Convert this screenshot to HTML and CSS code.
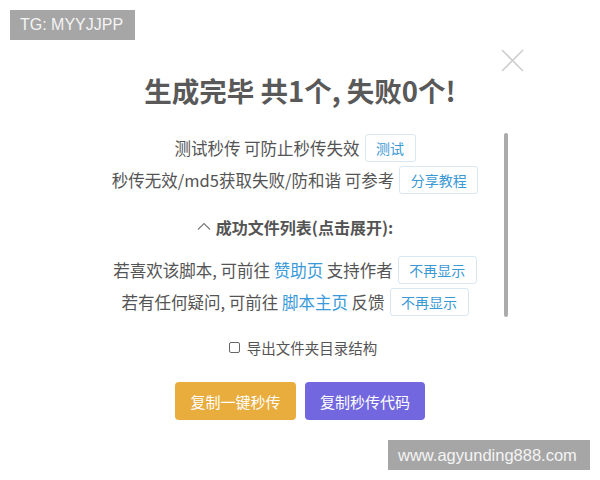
FILE: index.html
```html
<!DOCTYPE html>
<html lang="zh-CN">
<head>
<meta charset="utf-8">
<title>生成完毕</title>
<link rel="stylesheet" href="styles.css">
</head>
<body>
<div class="page">
  <div class="badge badge-tg">TG: MYYJJPP</div>
  <div class="popup">
    <button class="close" aria-label="关闭">
      <svg width="23" height="23" viewBox="0 0 23 23"><path d="M1 1L22 22M22 1L1 22" stroke="#cfcfcf" stroke-width="1.6" fill="none"/></svg>
    </button>
    <h2 class="title">生成完毕 共1个, 失败0个!</h2>
    <div class="content">
      <div class="scroll-body">
        <div class="row">测试秒传 可防止秒传失效<button class="mini">测试</button></div>
        <div class="row">秒传无效/md5获取失败/防和谐 可参考<button class="mini">分享教程</button></div>
        <div class="row section">
          <svg class="caret" width="14" height="8" viewBox="0 0 14 8"><path d="M1 7.5L7 1.5L13 7.5" stroke="#777" stroke-width="1.1" fill="none"/></svg>
          <span>成功文件列表(点击展开):</span>
        </div>
        <div class="row row-gap">若喜欢该脚本, 可前往&nbsp;<a class="link">赞助页</a>&nbsp;支持作者<button class="mini">不再显示</button></div>
        <div class="row">若有任何疑问, 可前往&nbsp;<a class="link">脚本主页</a>&nbsp;反馈<button class="mini">不再显示</button></div>
      </div>
      <div class="scrollbar"></div>
    </div>
    <label class="check"><span class="box"></span>导出文件夹目录结构</label>
    <div class="actions">
      <button class="btn btn-orange">复制一键秒传</button>
      <button class="btn btn-purple">复制秒传代码</button>
    </div>
  </div>
  <div class="badge badge-site">www.agyunding888.com</div>
</div>
</body>
</html>
```
FILE: styles.css
```css
html, body {
  margin: 0;
  padding: 0;
  background: #fff;
}
.page {
  position: relative;
  width: 600px;
  height: 480px;
  overflow: hidden;
  font-family: "Noto Sans CJK SC", "Noto Sans", sans-serif;
  color: #545454;
}
.badge {
  position: absolute;
  background: #a6a6a6;
  color: #f4f4f4;
  font-family: "Liberation Sans", Arial, sans-serif;
  height: 30px;
  line-height: 30px;
  box-sizing: border-box;
}
.badge-tg {
  left: 10px;
  top: 10px;
  width: 125px;
  padding-left: 10px;
  font-size: 16px;
}
.badge-site {
  left: 388px;
  top: 440px;
  width: 202px;
  padding-left: 10px;
  font-size: 16.5px;
}
.popup {
  position: relative;
  display: flex;
  flex-direction: column;
  align-items: center;
  padding-top: 72px;
}
.close {
  position: absolute;
  left: 501px;
  top: 49px;
  width: 23px;
  height: 23px;
  padding: 0;
  border: 0;
  background: none;
  display: block;
}
.close svg { display: block; }
.title {
  margin: 0;
  font-size: 27.5px;
  line-height: 36px;
  font-weight: 700;
  color: #595959;
}
.content {
  margin-top: 24px;
  width: 420px;
  display: flex;
}
.scroll-body {
  flex: 1;
  height: 186px;
  display: flex;
  flex-direction: column;
  align-items: center;
}
.scrollbar {
  width: 4px;
  height: 184px;
  margin: 1px 2px 0 4px;
  background: #ababab;
  border-radius: 2px;
}
.row {
  height: 32px;
  display: flex;
  align-items: center;
  justify-content: center;
  font-size: 16.5px;
  white-space: nowrap;
}
.section {
  margin-top: 15px;
  font-size: 16px;
  font-weight: 700;
}
.caret {
  margin-right: 5px;
  margin-top: -2px;
}
.row-gap { margin-top: 11px; }
.link {
  color: #3a9ad9;
}
.mini {
  margin-left: 5px;
  height: 28px;
  padding: 0 10.5px;
  border: 1px solid #d8e7f1;
  border-radius: 3px;
  background: #fff;
  color: #3a98d5;
  font-family: "Noto Sans CJK SC", sans-serif;
  font-size: 14px;
  line-height: 26px;
}
.check {
  margin-top: 19px;
  height: 20px;
  display: flex;
  align-items: center;
  font-size: 14.5px;
  color: #545454;
  margin-left: 6px;
}
.box {
  width: 9px;
  height: 9px;
  border: 1px solid #666;
  border-radius: 2px;
  margin-right: 7px;
}
.actions {
  margin-top: 25px;
  display: flex;
  gap: 9px;
}
.btn {
  width: 121px;
  height: 38px;
  border: 0;
  border-radius: 4px;
  color: #fff;
  font-family: "Noto Sans CJK SC", sans-serif;
  font-size: 15px;
}
.btn-orange { background: #e9ad3e; }
.btn-purple { background: #7267de; width: 120px; }
```
